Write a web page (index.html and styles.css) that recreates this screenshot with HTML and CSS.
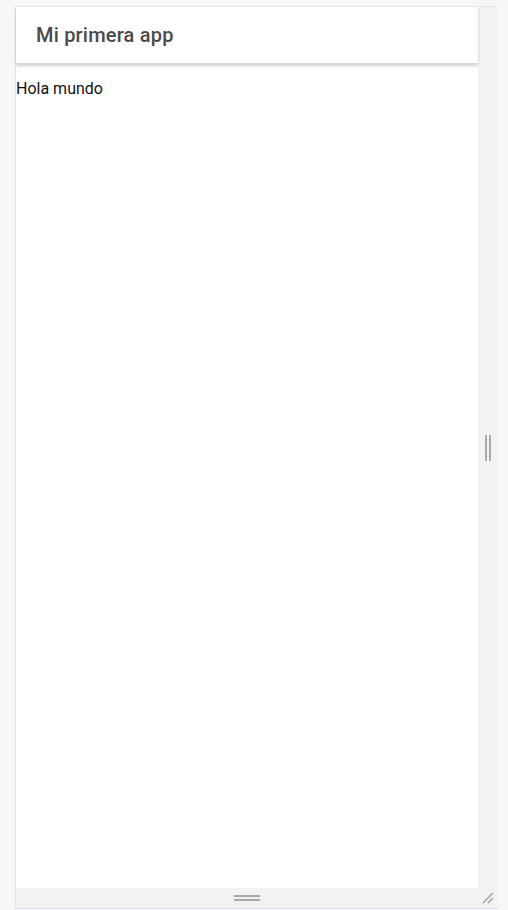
FILE: index.html
```html
<!DOCTYPE html>
<html lang="es">
<head>
    <meta charset="UTF-8">
    <title>Mi primera app</title>
    <link rel="stylesheet" href="styles.css">
</head>
<body>

<div class="stage">
    <div class="frame">
        <div class="screen">
            <div class="toolbar">Mi primera app</div>
            <div class="content">Hola mundo</div>
        </div>
        <div class="side-handle">
            <span class="grip-v"></span>
        </div>
        <div class="bottom-handle">
            <span class="grip-h"></span>
        </div>
        <div class="corner">
            <svg width="14" height="14" viewBox="0 0 14 14">
                <line x1="2" y1="12" x2="12" y2="2" stroke="#9e9e9e" stroke-width="1.4"/>
                <line x1="7" y1="12" x2="12" y2="7" stroke="#9e9e9e" stroke-width="1.4"/>
            </svg>
        </div>
    </div>
</div>

</body>
</html>
```

FILE: styles.css
```css
html, body {
    margin: 0;
    height: 100%;
}
body {
    background: #f6f7f7;
    font-family: Roboto, "Liberation Sans", sans-serif;
    overflow: hidden;
}
.stage {
    padding: 6px 10px 0 15px;
    height: 910px;
    box-sizing: border-box;
}
.frame {
    display: grid;
    grid-template-columns: 462px 20px;
    grid-template-rows: 881px 20px;
    border-top: 1px solid #e6e7e7;
    border-left: 1px solid #e2e3e3;
    width: 482px;
    border-bottom: 1px solid #d6e0e6;
}
.screen {
    background: #ffffff;
    display: flex;
    flex-direction: column;
}
.toolbar {
    height: 56px;
    padding-left: 20px;
    display: flex;
    align-items: center;
    font-size: 20px;
    font-weight: 500;
    letter-spacing: 0.2px;
    color: #4a4a4a;
    box-shadow: 0 2px 3px rgba(0, 0, 0, 0.18);
    border-bottom: 1px solid #d9d9d9;
    position: relative;
}
.content {
    padding-top: 15px;
    font-size: 16px;
    color: #111111;
}
.side-handle {
    background: #f1f2f4;
    display: flex;
    align-items: center;
    justify-content: center;
}
.grip-v {
    width: 2px;
    height: 26px;
    border-left: 2px solid #a8a8a8;
    border-right: 2px solid #a8a8a8;
}
.bottom-handle {
    background: #f1f2f4;
    display: flex;
    align-items: center;
    justify-content: center;
}
.grip-h {
    width: 26px;
    height: 2px;
    border-top: 2px solid #a8a8a8;
    border-bottom: 2px solid #a8a8a8;
}
.corner {
    background: #f1f2f4;
    display: flex;
    align-items: center;
    justify-content: center;
}
```
